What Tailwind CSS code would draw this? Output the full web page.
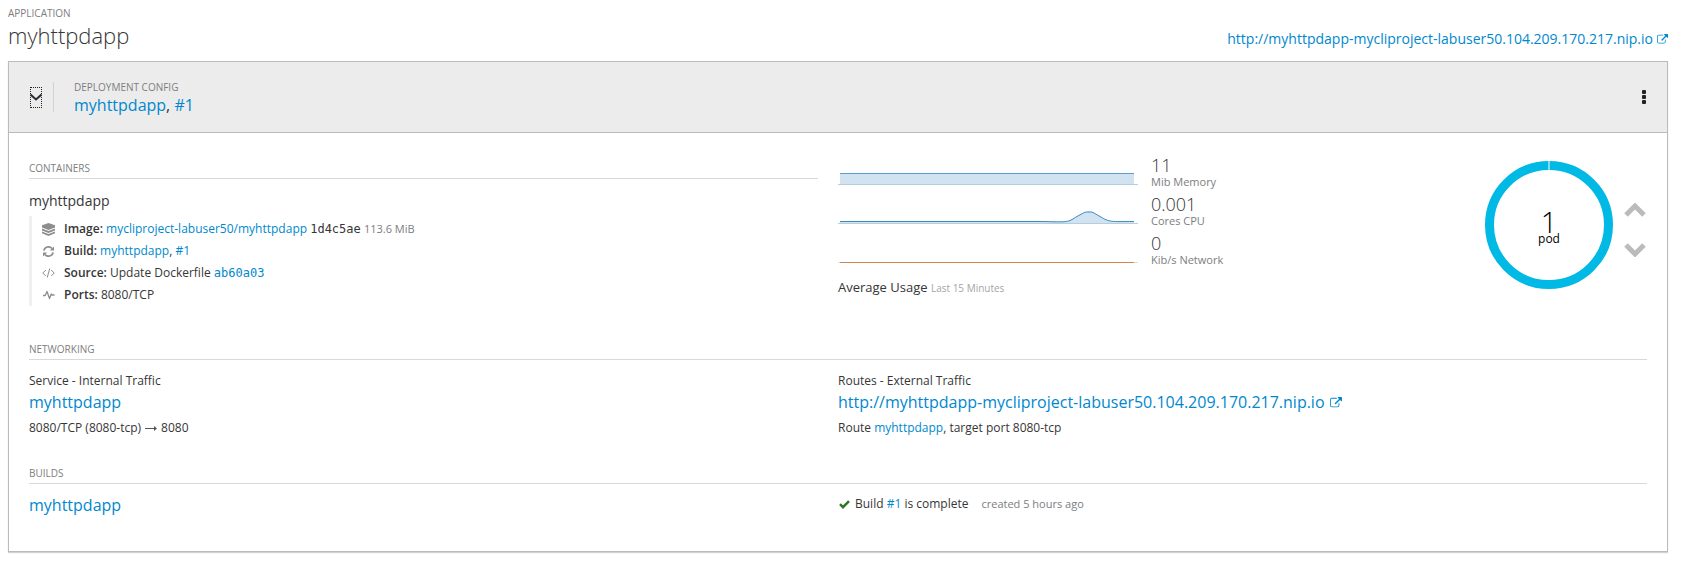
<!DOCTYPE html>
<html lang="en">
<head>
<meta charset="utf-8">
<title>myhttpdapp</title>
<script src="https://cdn.jsdelivr.net/npm/@tailwindcss/browser@4"></script>
</head>
<body class="bg-white font-['Open_Sans',sans-serif] text-xs leading-5 text-[#363636]">
<svg class="hidden" aria-hidden="true">
  <symbol id="external" viewBox="0 0 14 14">
    <path fill="currentColor" d="M11 7.25v2.5A2.25 2.25 0 0 1 8.750 12h-6.5A2.25 2.25 0 0 1 0 9.750v-6.500A2.250 2.250 0 0 1 2.250 1h5.500a.25.25 0 0 1 .25.25v.5a.25.25 0 0 1-.25.25h-5.500C1.560 2 1 2.560 1 3.250v6.500c0 .690.560 1.250 1.250 1.250h6.500c.690 0 1.250-.560 1.250-1.250v-2.500A.25.25 0 0 1 10.250 7h.5a.25.25 0 0 1 .25.25zM14 .5v4a.5.5 0 0 1-.860.350L11.770 3.480 6.670 8.570a.25.25 0 0 1-.360 0l-.890-.890a.25.25 0 0 1 0-.360l5.100-5.090L9.150.860A.5.5 0 0 1 9.500 0h4a.5.5 0 0 1 .5.5z"/>
  </symbol>
</svg>
<main class="pt-1 pr-[13px] pb-6 pl-2">
  <header class="mb-3 flex items-end justify-between">
    <div>
      <div class="text-[10px] leading-[18px] text-[#7c7e80] uppercase">Application</div>
      <h1 class="text-[22px] leading-[27px] font-light">myhttpdapp</h1>
    </div>
    <a href="#" class="flex items-center gap-1 text-sm leading-5 text-[#0088ce]">http://myhttpdapp-mycliproject-labuser50.104.209.170.217.nip.io<svg class="size-[11px]"><use href="#external"/></svg></a>
  </header>

  <section class="border border-[#bbb] shadow-[0_1px_1px_rgba(3,3,3,0.18)]">
    <div class="flex h-[71px] items-center border-b border-[#bbb] bg-[#ececec] px-5">
      <button aria-label="Collapse" aria-expanded="true" class="ml-px flex h-[21px] w-3 items-center justify-center border border-dotted border-[#222]">
        <svg class="h-2 w-3 shrink-0" viewBox="0 0 12 8" fill="none" stroke="#292e34" stroke-width="2"><path d="M.5 1.500 6 6.500l5.500-5"/></svg>
      </button>
      <div class="ml-[11px] h-[30px] w-px bg-[#d1d1d1]"></div>
      <div class="ml-5 flex-1">
        <div class="text-[10px] leading-4 text-[#7c7e80] uppercase">Deployment Config</div>
        <h2 class="text-base leading-5"><a href="#" class="text-[#0088ce]">myhttpdapp</a>, <a href="#" class="text-[#0088ce]">#1</a></h2>
      </div>
      <button aria-label="Actions" class="mr-px text-[#222]">
        <svg class="h-[15px] w-[4px]" viewBox="0 0 4 15" fill="currentColor"><rect width="4" height="4" rx="1"/><rect y="5" width="4" height="4" rx="1"/><rect y="10" width="4" height="4" rx="1"/></svg>
      </button>
    </div>

    <div class="px-5 pt-[23px] pb-[34px]">
      <div class="grid h-[180px] grid-cols-2">
        <div class="pr-5">
          <h3 class="border-b border-[#d9d9d9] pt-[2px] text-[10px] leading-5 text-[#7c7e80] uppercase">Containers</h3>
          <h4 class="mt-3 text-sm leading-5">myhttpdapp</h4>
          <ul class="mt-[5px] border-l-3 border-[#f0f0f0] pt-[2px] leading-[22px]">
            <li class="flex h-[22px] items-center"><span class="ml-[10px] w-[22px] text-[#8b8d8f]"><svg class="h-[13px] w-[13px]" viewBox="0 0 13 13"><path fill="currentColor" d="M6.500 0 13 2.200v2.300L6.500 7 0 4.500V2.200zM0 5.600l6.500 2.500L13 5.600v1.900L6.500 10 0 7.500zM0 8.600l6.500 2.500L13 8.600v1.700L6.500 13 0 10.300z"/></svg></span><span><b class="font-semibold">Image:</b> <a href="#" class="text-[#0088ce]">mycliproject-labuser50/myhttpdapp</a> <span class="font-['DejaVu_Sans_Mono',monospace] text-xs">1d4c5ae</span> <span class="text-[11px] text-[#7c7e80]">113.6 MiB</span></span></li>
            <li class="flex h-[22px] items-center"><span class="ml-[10px] w-[22px] text-[#8b8d8f]"><svg class="ml-px size-[11px]" viewBox="0 0 12 12"><path fill="none" stroke="currentColor" stroke-width="1.900" d="M1 5a5 5 0 0 1 8.800-2.200M11 7a5 5 0 0 1-8.800 2.200"/><path fill="currentColor" d="M12 .5V5H7.500zM0 11.500V7h4.500z"/></svg></span><span><b class="font-semibold">Build:</b> <a href="#" class="text-[#0088ce]">myhttpdapp</a>, <a href="#" class="text-[#0088ce]">#1</a></span></li>
            <li class="flex h-[22px] items-center"><span class="ml-[10px] w-[22px] text-[#8b8d8f]"><svg class="h-3 w-[13px]" viewBox="0 0 13 12" fill="none" stroke="currentColor" stroke-width="1"><path d="M3.800 3 .8 6l3 3M9.200 3l3 3-3 3M7.800 1.500l-2.600 9"/></svg></span><span><b class="font-semibold">Source:</b> Update Dockerfile <a href="#" class="font-['DejaVu_Sans_Mono',monospace] text-xs text-[#0088ce]">ab60a03</a></span></li>
            <li class="flex h-[22px] items-center"><span class="ml-[10px] w-[22px] text-[#8b8d8f]"><svg class="h-3 w-[13px]" viewBox="0 0 13 12" fill="none" stroke="currentColor" stroke-width="1.300" stroke-linejoin="round"><path d="M1 6.500h2.200L5 2.500l2.500 7L9.200 5l.8 1h2.500"/></svg></span><span><b class="font-semibold">Ports:</b> 8080/TCP</span></li>
          </ul>
        </div>

        <div class="flex justify-between">
          <div>
            <div class="flex h-[39px]">
              <svg class="mt-px h-7 w-[300px]" viewBox="0 0 300 28"><path fill="#d1e3f0" d="M2 16h294v12H2z"/><path fill="#5b9fd0" d="M2 16h294v1H2z"/><path fill="#b9cdda" d="M0 27h300v1H0z"/></svg>
              <div class="ml-[13px]"><div class="text-lg leading-[18px] font-light">11</div><div class="text-[11px] leading-4 text-[#7c7e80]">Mib Memory</div></div>
            </div>
            <div class="flex h-[39px]">
              <svg class="mt-px h-7 w-[300px]" viewBox="0 0 300 28"><path fill="#d1e3f0" d="M2 25h204c28 1 24 0 33-5 9-5 8-4.500 12-4.500s3 0 11 4.500c10 6 10 5 34 5v3H2z"/><path fill="#b9cdda" d="M0 27h300v1H0z"/><path fill="none" stroke="#3b8cc5" d="M2 25.500h204c28 1 24 0 33-5 9-5 8-4.500 12-4.500s3 0 11 4.500c10 6 10 5 34 5"/></svg>
              <div class="ml-[13px]"><div class="text-lg leading-[18px] font-light">0.001</div><div class="text-[11px] leading-4 text-[#7c7e80]">Cores CPU</div></div>
            </div>
            <div class="flex h-[39px]">
              <svg class="mt-px h-7 w-[300px]" viewBox="0 0 300 28"><path fill="#ddd" d="M0 27h300v1H0z"/><path fill="#cf8650" d="M2 27h294v1H2z"/></svg>
              <div class="ml-[13px]"><div class="text-lg leading-[18px] font-light">0</div><div class="text-[11px] leading-4 text-[#7c7e80]">Kib/s Network</div></div>
            </div>
            <div class="mt-1 text-[13px] leading-5">Average Usage <span class="text-[10px] text-[#a5a5a5]">Last 15 Minutes</span></div>
          </div>
          <div class="flex h-[130px] items-center gap-[10px] pt-2 pr-px">
            <div class="relative size-[130px]">
              <svg class="size-[130px]" viewBox="0 0 130 130"><circle cx="65" cy="65" r="59.500" fill="none" stroke="#00b9e4" stroke-width="9"/><path stroke="#fff" d="M65 0v11"/></svg>
              <div class="absolute inset-0 flex flex-col items-center justify-center pt-2 text-black"><span class="text-[29px] leading-5 font-light">1</span><span class="text-xs leading-[14px]">pod</span></div>
            </div>
            <div class="flex flex-col gap-[26px] pt-[9px]">
              <button aria-label="Scale up" class="block"><svg class="h-[14px] w-[22px]" viewBox="0 0 22 14" fill="none" stroke="#bbb" stroke-width="5"><path d="m2 12 9-9 9 9"/></svg></button>
              <button aria-label="Scale down" class="block"><svg class="h-[14px] w-[22px]" viewBox="0 0 22 14" fill="none" stroke="#bbb" stroke-width="5"><path d="m2 2 9 9 9-9"/></svg></button>
            </div>
          </div>
        </div>
      </div>

      <h3 class="border-b border-[#d9d9d9] pt-[3px] text-[10px] leading-5 text-[#7c7e80] uppercase">Networking</h3>
      <div class="mt-[11px] grid grid-cols-2">
        <div>
          <div>Service - Internal Traffic</div>
          <div class="text-base leading-[23px]"><a href="#" class="text-[#0088ce]">myhttpdapp</a></div>
          <div class="mt-1 flex items-center gap-1">8080/TCP (8080-tcp)<svg class="h-[5px] w-3" viewBox="0 0 12 5"><path fill="#555" d="M0 2h9V0l3 2.500L9 5V3H0z"/></svg>8080</div>
        </div>
        <div>
          <div>Routes - External Traffic</div>
          <a href="#" class="flex items-center gap-[5px] text-base leading-[23px] text-[#0088ce]">http://myhttpdapp-mycliproject-labuser50.104.209.170.217.nip.io<svg class="size-3"><use href="#external"/></svg></a>
          <div class="mt-1">Route <a href="#" class="text-[#0088ce]">myhttpdapp</a>, target port 8080-tcp</div>
        </div>
      </div>

      <h3 class="mt-[23px] border-b border-[#d9d9d9] pt-[2px] text-[10px] leading-5 text-[#7c7e80] uppercase">Builds</h3>
      <div class="mt-[9px] grid grid-cols-2 items-start">
        <div class="text-base leading-6"><a href="#" class="text-[#0088ce]">myhttpdapp</a></div>
        <div class="flex items-center leading-[22px]">
          <svg class="ml-px h-[9px] w-[11px]" viewBox="0 0 11 9"><path fill="none" stroke="#2d7623" stroke-width="2.500" d="M1 4.200 4 7.200 10 1.200"/></svg>
          <span class="ml-[5px]">Build <a href="#" class="text-[#0088ce]">#1</a> is complete</span>
          <span class="ml-[13px] text-[11px] text-[#7c7e80]">created 5 hours ago</span>
        </div>
      </div>
    </div>
  </section>
</main>
</body>
</html>
